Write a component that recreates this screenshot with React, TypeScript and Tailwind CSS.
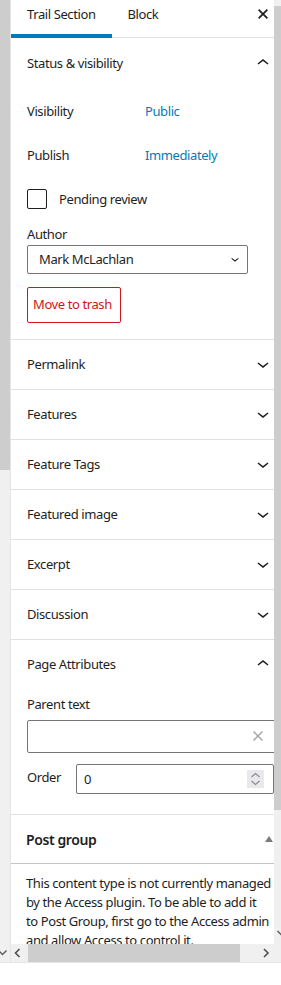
import React from "react";

const collapsed = ["Permalink", "Features", "Feature Tags", "Featured image", "Excerpt", "Discussion"];

const postGroupLines = [
    "This content type is not currently managed",
    "by the Access plugin. To be able to add it",
    "to Post Group, first go to the Access admin",
    "and allow Access to control it.",
];

function ChevronDown({ size = 24 }: { size?: number }) {
    return (
        <svg width={size} height={size} viewBox="0 0 24 24" className="shrink-0">
            <path d="M17.5 11.6L12 16l-5.5-4.4.9-1.2L12 14l4.6-3.6.9 1.2z" fill="#1e1e1e" />
        </svg>
    );
}

function ChevronUp() {
    return (
        <svg width={24} height={24} viewBox="0 0 24 24" className="shrink-0">
            <path d="M6.5 12.4L12 8l5.5 4.4-.9 1.2L12 10l-4.6 3.6-.9-1.2z" fill="#1e1e1e" />
        </svg>
    );
}

function PanelHeader({ title, open }: { title: string; open?: boolean }) {
    return (
        <div className="h-[49px] flex items-center justify-between px-4">
            <span className="pt-[2px]">{title}</span>
            {open ? <ChevronUp /> : <ChevronDown />}
        </div>
    );
}

export default function App() {
    return (
        <div className="w-[281px] h-[985px] bg-white flex flex-col overflow-hidden font-['Noto_Sans',sans-serif] text-[13px] text-[#1e1e1e] tracking-[-0.4px]">
            <div className="flex h-[962px]">
                {/* editor scrollbar, cut at the left edge */}
                <div className="w-[10px] flex flex-col bg-[#f0f0f0]">
                    <div className="h-[470px] bg-[#cdcdcd]" />
                    <div className="flex-1" />
                    <div className="h-[18px]">
                        <svg width={10} height={18} viewBox="0 0 10 18">
                            <polyline points="-1,7 2.5,10.5 6.5,6.5" fill="none" stroke="#606060" strokeWidth={1.5} />
                        </svg>
                    </div>
                </div>
                <div className="w-px bg-[#e6e6e6]" />

                {/* SIDEBAR */}
                <div className="flex-1 min-w-0 flex flex-col">
                    <div className="flex-1 overflow-hidden">
                        <div className="w-[280px]">
                            {/* TABS */}
                            <div className="flex h-[38px] border-b border-[#e0e0e0]">
                                <div className="h-[38px] -mb-px px-4 pb-[4px] flex items-center border-b-4 border-[#007cba]">
                                    Trail Section
                                </div>
                                <div className="h-[38px] -mb-px px-4 pb-[4px] flex items-center border-b-4 border-transparent">
                                    Block
                                </div>
                                <svg width={24} height={24} viewBox="0 0 24 24" className="ml-auto mr-4 mt-[2px]">
                                    <path
                                        d="M12 13.06l3.712 3.713 1.061-1.06L13.061 12l3.712-3.712-1.06-1.06L12 10.938 8.288 7.227l-1.061 1.06L10.939 12l-3.712 3.712 1.06 1.061L12 13.061z"
                                        fill="#1e1e1e"
                                        stroke="#1e1e1e"
                                        strokeWidth={0.4}
                                    />
                                </svg>
                            </div>

                            {/* STATUS & VISIBILITY */}
                            <div className="border-b border-[#e0e0e0]">
                                <PanelHeader title="Status & visibility" open />
                                <div className="px-4 pb-4">
                                    <div className="h-[48px] pt-[2px] flex items-center">
                                        <span className="w-[118px]">Visibility</span>
                                        <span className="text-[#007cba]">Public</span>
                                    </div>
                                    <div className="h-[40px] pt-[2px] flex items-center">
                                        <span className="w-[118px]">Publish</span>
                                        <span className="text-[#007cba]">Immediately</span>
                                    </div>
                                    <div className="pt-[14px] flex items-center gap-3">
                                        <div className="w-[20px] h-[20px] border border-[#1e1e1e] rounded-[2px]" />
                                        <span className="pt-px">Pending review</span>
                                    </div>
                                    <div className="mt-[14px] h-[18px] leading-[18px] pt-px">Author</div>
                                    <div className="mt-[3px] h-[29px] w-[221px] border border-[#757575] rounded-[2px] flex items-center justify-between pl-[11px] pr-[4px]">
                                        <span className="pt-px">Mark McLachlan</span>
                                        <ChevronDown size={16} />
                                    </div>
                                    <div className="mt-[13px] h-[36px] w-[94px] border border-[#cc1818] rounded-[2px] text-[#cc1818] pl-[5px] pt-px flex items-center whitespace-nowrap">
                                        Move to trash
                                    </div>
                                </div>
                            </div>

                            {/* COLLAPSED PANELS */}
                            {collapsed.map((title) => (
                                <div key={title} className="border-b border-[#e0e0e0]">
                                    <PanelHeader title={title} />
                                </div>
                            ))}

                            {/* PAGE ATTRIBUTES */}
                            <div className="border-b border-[#e0e0e0]">
                                <PanelHeader title="Page Attributes" open />
                                <div className="px-4 pt-[5px] pb-[20px]">
                                    <div className="h-[18px] leading-[18px] pt-px">Parent text</div>
                                    <div className="mt-2 h-[33px] w-[256px] border border-[#757575] rounded-[2px] flex items-center justify-end pr-[19px]">
                                        <svg width={10} height={10} viewBox="0 0 10 10">
                                            <path d="M0.5 0.5L9.5 9.5M9.5 0.5L0.5 9.5" stroke="#a0a0a0" strokeWidth={1.3} />
                                        </svg>
                                    </div>
                                    <div className="mt-[11px] flex">
                                        <span className="w-[49px] pt-[4px]">Order</span>
                                        <div className="h-[30px] w-[198px] border border-[#757575] rounded-[2px] flex items-center justify-between pl-[7px] pr-[9px]">
                                            <span className="pt-[2px]">0</span>
                                            <svg width={17} height={18} viewBox="0 0 17 18" className="bg-[#e9e9ed]">
                                                <polyline points="4.5,7 8.5,3.5 12.5,7" fill="none" stroke="#8a8a8a" strokeWidth={1.1} />
                                                <polyline points="4.5,11 8.5,14.5 12.5,11" fill="none" stroke="#8a8a8a" strokeWidth={1.1} />
                                            </svg>
                                        </div>
                                    </div>
                                </div>
                            </div>

                            {/* POST GROUP */}
                            <div>
                                <div className="h-[49px] flex items-center justify-between pl-[15px] pr-[18px] border-b border-[#c3c4c7]">
                                    <span className="text-[14px] font-semibold pt-px">Post group</span>
                                    <svg width={8} height={6} viewBox="0 0 8 6">
                                        <polygon points="0,6 4,0 8,6" fill="#787c82" />
                                    </svg>
                                </div>
                                <div className="pl-[15px] pt-[10px] leading-[19px]">
                                    {postGroupLines.map((line) => (
                                        <div key={line} className="whitespace-nowrap">{line}</div>
                                    ))}
                                </div>
                            </div>
                        </div>
                    </div>

                    {/* HORIZONTAL SCROLLBAR */}
                    <div className="h-[18px] shrink-0 bg-[#f0f0f0] flex items-center">
                        <svg width={17} height={18} viewBox="0 0 17 18" className="shrink-0">
                            <polyline points="8.5,5 4.5,9 8.5,13" fill="none" stroke="#505050" strokeWidth={1.6} />
                        </svg>
                        <div className="w-[212px] h-[18px] bg-[#cdcdcd]" />
                        <div className="flex-1" />
                        <svg width={17} height={18} viewBox="0 0 17 18" className="shrink-0">
                            <polyline points="7,5 11,9 7,13" fill="none" stroke="#505050" strokeWidth={1.6} />
                        </svg>
                    </div>
                </div>

                {/* SIDEBAR VERTICAL SCROLLBAR, cut at the right edge */}
                <div className="w-[7px] flex flex-col bg-[#f0f0f0]">
                    <div className="h-[6px]" />
                    <div className="h-[804px] bg-[#cdcdcd]" />
                    <div className="flex-1" />
                    <svg width={7} height={14} viewBox="0 0 7 14" className="mb-[4px]">
                        <polyline points="3.5,5 7,8.5 10.5,5" fill="none" stroke="#606060" strokeWidth={1.5} />
                    </svg>
                    <div className="h-[18px] bg-[#f0f0f0]" />
                </div>
            </div>
            <div className="flex-1 border-t border-[#e6e6e6]" />
        </div>
    );
}
